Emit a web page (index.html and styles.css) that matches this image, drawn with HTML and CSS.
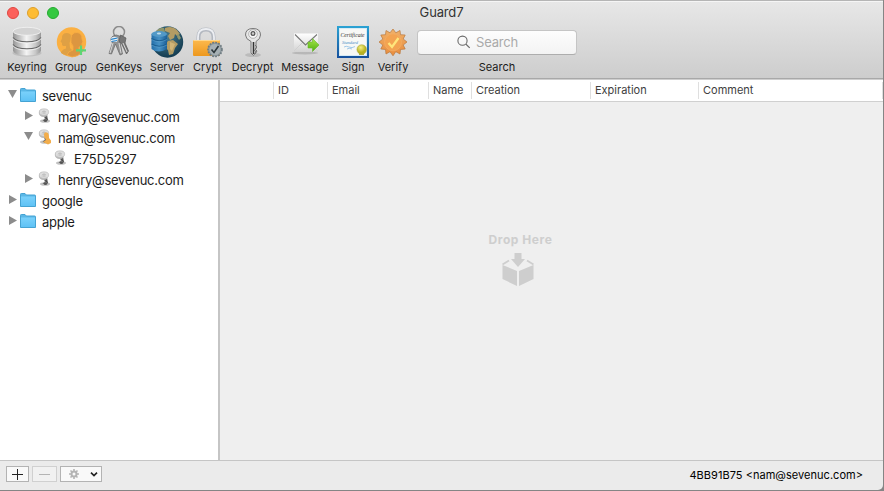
FILE: index.html
```html
<!DOCTYPE html>
<html lang="en">
<head>
<meta charset="utf-8">
<title>Guard7</title>
<link rel="stylesheet" href="styles.css">
</head>
<body>
<svg class="defs" width="0" height="0">
  <defs>
    <linearGradient id="metal"><stop offset="0" stop-color="#959595"/><stop offset=".25" stop-color="#c5c5c5"/><stop offset=".48" stop-color="#f4f4f4"/><stop offset=".8" stop-color="#c8c8c8"/><stop offset="1" stop-color="#979797"/></linearGradient>
    <linearGradient id="lock" x2="0" y2="1"><stop offset="0" stop-color="#fcb94d"/><stop offset="1" stop-color="#ed981e"/></linearGradient>
    <linearGradient id="dbblue"><stop offset="0" stop-color="#2470ab"/><stop offset=".5" stop-color="#4791c4"/><stop offset="1" stop-color="#1b5f98"/></linearGradient>
    <radialGradient id="sea" cx=".45" cy=".35" r=".65"><stop offset="0" stop-color="#4c8093"/><stop offset="1" stop-color="#133b50"/></radialGradient>
    <linearGradient id="badge" x2="0" y2="1"><stop offset="0" stop-color="#efb16b"/><stop offset="1" stop-color="#e98c3d"/></linearGradient>
    <linearGradient id="cert" x2="0" y2="1"><stop offset="0" stop-color="#2ba3d4"/><stop offset="1" stop-color="#154f9c"/></linearGradient>
    <linearGradient id="env" x2="0" y2="1"><stop offset="0" stop-color="#fff"/><stop offset="1" stop-color="#d2d2d2"/></linearGradient>
    <linearGradient id="green" x2="0" y2="1"><stop offset="0" stop-color="#a8e94b"/><stop offset="1" stop-color="#4fae10"/></linearGradient>
    <linearGradient id="folder" x2="0" y2="1"><stop offset="0" stop-color="#7ad1fb"/><stop offset="1" stop-color="#5fc2f5"/></linearGradient>
    <radialGradient id="seal" cx=".4" cy=".3"><stop offset="0" stop-color="#f4ef83"/><stop offset="1" stop-color="#b9b321"/></radialGradient>
    <symbol id="i-folder" viewBox="0 0 16 14">
      <path d="M.5 13.5V1.3Q.5.5 1.3.5H5L6.4 2H14.7Q15.500 2 15.500 2.800V13.500Z" fill="#5ab7e6" stroke="#45a3d3"/>
      <path d="M1 3.500H15V13H1Z" fill="url(#folder)"/>
    </symbol>
    <symbol id="i-key" viewBox="0 0 14 16">
      <ellipse cx="7" cy="13" rx="5" ry="1.800" fill="#c2c2c2"/>
      <path d="M5.500 7L9 6L10 12.300L7.500 14L4.500 12.500L6.800 10.800Z" fill="#6c6c6c"/>
      <ellipse cx="5.500" cy="4.900" rx="4.700" ry="4" fill="#b9b9b9"/>
      <ellipse cx="6" cy="4" rx="4.700" ry="3.200" fill="#dedede" stroke="#bcbcbc" stroke-width=".6"/>
      <path d="M4 3.500H8M3.500 5H8M6 2V6" stroke="#b5b5b5" stroke-width=".6"/>
      <path d="M7.500 9L9.500 11.500M6 13H9" stroke="#333" stroke-width=".8"/>
    </symbol>
  </defs>
</svg>
<div class="window">
  <header class="toolbar">
    <div class="titlebar">
      <div class="lights"><i class="close"></i><i class="min"></i><i class="max"></i></div>
      <div class="title">Guard7</div>
    </div>
    <div class="tools">
      <div class="tool">
        <svg width="32" height="32" viewBox="0 0 32 32"><ellipse cx="16" cy="27" rx="14.500" ry="3.500" fill="#aaa" opacity=".5"/>
          <path d="M2 5V25Q4 29.500 16 29.500T30 25V5Z" fill="url(#metal)"/>
          <path d="M2 11.500Q5 15.800 16 15.800T30 11.500M2 18.500Q5 22.800 16 22.800T30 18.500" fill="none" stroke="#666" stroke-width="1.200"/>
          <path d="M2 12.800Q5 17 16 17T30 12.800M2 19.800Q5 24 16 24T30 19.800" fill="none" stroke="#f5f5f5" stroke-width=".8"/>
          <ellipse cx="16" cy="5.300" rx="14" ry="4" fill="#d3d3d3" stroke="#f4f4f4" stroke-width=".8"/></svg>
        <span>Keyring</span></div>
      <div class="tool">
        <svg width="32" height="32" viewBox="0 0 32 32"><circle cx="16.500" cy="16" r="14.700" fill="#fbb042"/>
          <path d="M6 27Q6 24 11 22.500V20H8Q6.500 19 7 17L5.500 15.500L7 12.500Q6.500 7 12 7Q17 7 16 13L14.500 17L15 22L17 24V30Q10 29.500 6 27Z" fill="#dfa044"/>
          <path d="M12 29Q12.500 25.500 18 24V20Q15 17 16 12Q16.500 6.500 22 6.500Q27 7 27 13L28 16L27 17V20L24 21V23.500L28 25Q23 31 17 31Z" fill="#dc9640" stroke="#f9ad43" stroke-width=".8"/>
          <path d="M26 19.500V29M21 24.300H31" stroke="#5ed575" stroke-width="2.200"/></svg>
        <span>Group</span></div>
      <div class="tool">
        <svg width="32" height="32" viewBox="0 0 32 32"><circle cx="16" cy="6" r="5.500" fill="none" stroke="#8c8c8c" stroke-width="1.500"/>
          <path d="M13.500 9L19 11L17 16L19.500 28L17 29L12.500 18L8.500 28L6 27.500L9.500 17Q6 13 10 10Z" fill="#929292" stroke="#666" stroke-width=".7"/>
          <path d="M17.500 9L23 12L22 17L25.500 25L23.500 28L19 18.500L16 15Z" fill="#777" stroke="#575757" stroke-width=".7"/>
          <path d="M10 17L7 27M16 17L18 27M20 17L24 26" stroke="#d7d7d7" stroke-width="1"/>
          <path d="M8 12Q11 9.500 15 12L14 16L8 15.500Z" fill="#e5edf4"/><path d="M8 13.300L14.500 12M8.500 15.500L14 14.500" stroke="#2484cc" stroke-width="1.200"/></svg>
        <span>GenKeys</span></div>
      <div class="tool">
        <svg width="34" height="32" viewBox="0 0 34 32"><circle cx="17.500" cy="16" r="15.700" fill="url(#sea)"/>
          <path d="M15 2Q22-1 27 4L30 8L27 10L25 8L24 12L20 14L18 10L20 7L15 5ZM18 15L23 14L28 18L25 22L23 28L19 29L18 24L14 21Z" fill="#b39c64"/>
          <path d="M28 7L31 12L29 14L27 11ZM6 5Q10 1 14 2L15 6L8 9Z" fill="#8d956d"/>
          <path d="M20 16L25 18L22 25L20 23Z" fill="#d1b577"/>
          <path d="M1.500 8V23Q8 28 17 23V8Z" fill="url(#dbblue)"/><ellipse cx="9.200" cy="8" rx="7.800" ry="3" fill="#5299c7"/>
          <path d="M1.500 12.500Q9 17 17 12.500M1.500 18Q9 22.500 17 18" stroke="#1b5f92" stroke-width="1.100" fill="none"/><path d="M1.500 13.500Q9 18 17 13.500M1.500 19Q9 23.500 17 19" stroke="#62a4cf" stroke-width=".5" fill="none"/><ellipse cx="9" cy="7.500" rx="2.200" ry="1" fill="#bfdcec"/></svg>
        <span>Server</span></div>
      <div class="tool">
        <svg width="32" height="32" viewBox="0 0 32 32"><path d="M6.500 16V11Q6.500 3.500 14 3.500T21.500 11V16" fill="none" stroke="#b2b7bf" stroke-width="4"/>
          <path d="M6 15V11Q6 3 14 3T22 11V15" fill="none" stroke="#eceef2" stroke-width="1.800"/>
          <rect x="1" y="14" width="27" height="16" rx="1" fill="url(#lock)"/><path d="M1.500 14.500H27.500" stroke="#ffd78c"/>
          <circle cx="23" cy="23.500" r="7" fill="#8c989d" stroke="#6d7a80" stroke-width="1.600" stroke-dasharray="1.800 1.200"/><circle cx="23" cy="23.500" r="5.500" fill="#a6b0b4"/>
          <path d="M19.500 23.500L22 26.500L26.500 20" fill="none" stroke="#2d373c" stroke-width="1.600"/></svg>
        <span>Crypt</span></div>
      <div class="tool">
        <svg width="32" height="32" viewBox="0 0 32 32"><ellipse cx="16" cy="29" rx="8" ry="2" fill="#aaa" opacity=".6"/>
          <path d="M16 2.500Q23.500 2.500 23.500 9Q23.500 13 19 15.500V23L17.500 24L19 26L16.500 29.500L14 27V15.500Q8.500 13 8.500 9Q8.500 2.500 16 2.500Z" fill="#e6e6e6" stroke="#777"/>
          <circle cx="16" cy="8" r="4.300" fill="#fafafa" stroke="#999" stroke-width=".7"/><circle cx="16" cy="7.500" r="1.900" fill="#d0d0d0" stroke="#555" stroke-width="1.200"/>
          <path d="M16.500 16V28" stroke="#333" stroke-width="1.600"/><path d="M18 19L20 21L18 23L20 25L18 28" fill="none" stroke="#777"/></svg>
        <span>Decrypt</span></div>
      <div class="tool">
        <svg width="32" height="32" viewBox="0 0 32 32"><ellipse cx="16" cy="27" rx="13" ry="1.500" fill="#999" opacity=".5"/>
          <rect x="5" y="7.500" width="24" height="18.500" fill="url(#env)"/><path d="M5 25L14 16M29 25L20 16" stroke="#d0d0d0"/><path d="M6 8.500L16.500 19L28 8.500" fill="none" stroke="#777" stroke-width="1.100"/>
          <path d="M19 16H23.500V12.500L30 19L23.500 25.500V22H19Z" fill="url(#green)" stroke="#64b527" stroke-width=".6"/></svg>
        <span>Message</span></div>
      <div class="tool">
        <svg width="32" height="32" viewBox="0 0 32 32"><rect width="32" height="32" fill="url(#cert)"/><rect x="2" y="2" width="28" height="28" fill="#d7ebf5"/><rect x="3" y="3" width="26" height="26" fill="#f7f8f6"/>
          <text class="cert-name" x="3.500" y="11" textLength="24" lengthAdjust="spacingAndGlyphs">Certificate</text>
          <text class="cert-kind" x="5" y="18" textLength="16" lengthAdjust="spacingAndGlyphs">Standard</text>
          <path d="M7 21Q9 19.500 12 21T18 20.500M10 23Q12 21.500 15 23" fill="none" stroke="#8bbce4" stroke-width=".8"/>
          <path d="M22 26V29H27V26" fill="#b7b341"/><circle cx="24.700" cy="23.500" r="4.800" fill="url(#seal)" stroke="#aaa642" stroke-width=".5"/></svg>
        <span>Sign</span></div>
      <div class="tool">
        <svg width="32" height="32" viewBox="0 0 32 32"><path d="M16 3L18.800 6.800L23 4.500L23.500 8.700L28.200 9L26.200 13L30 16L26.200 19L28.200 23L23.500 23.500L23 28L18.800 25.700L16 29.800L13 25.700L9 28L8.500 23.500L3.800 23L5.800 19L2 16L5.800 13L3.800 9L8.500 8.700L9 4.500L13 6.800Z" fill="url(#badge)" stroke="#b9793d" stroke-width=".7"/><circle cx="16" cy="16.300" r="8.500" fill="#f3a351" stroke="#f3b26a" stroke-width=".6"/>
          <path d="M11.500 17L15 21L21.500 12" fill="none" stroke="#ffe57b" stroke-width="2.300"/></svg>
        <span>Verify</span></div>
      <div class="tool search">
        <div class="field"><svg width="14" height="14" viewBox="0 0 14 14"><circle cx="5.500" cy="5.700" r="4.600" fill="none" stroke="#696969" stroke-width="1.100"/><path d="M8.900 9.100L12.700 12.900" stroke="#696969" stroke-width="1.300"/></svg><span class="placeholder">Search</span></div>
        <span>Search</span></div>
    </div>
  </header>
  <main class="content">
    <nav class="tree">
      <div class="row"><i class="arrow open"></i><svg class="folder"><use href="#i-folder"/></svg><span>sevenuc</span></div>
      <div class="row child"><i class="arrow"></i><svg class="key"><use href="#i-key"/></svg><span>mary@sevenuc.com</span></div>
      <div class="row child"><i class="arrow open"></i><svg class="key" viewBox="0 0 14 16"><use href="#i-key" width="14" height="16"/><path d="M6 5Q7 2 10 4Q11.500 6 11 9L13 11.500V14L10 15.500L5 13L8 11Q5.500 8 6 5Z" fill="#f2ad4b"/></svg><span>nam@sevenuc.com</span></div>
      <div class="row leaf"><i class="arrow none"></i><svg class="key"><use href="#i-key"/></svg><span class="keyid">E75D5297</span></div>
      <div class="row child"><i class="arrow"></i><svg class="key"><use href="#i-key"/></svg><span>henry@sevenuc.com</span></div>
      <div class="row"><i class="arrow"></i><svg class="folder"><use href="#i-folder"/></svg><span>google</span></div>
      <div class="row"><i class="arrow"></i><svg class="folder"><use href="#i-folder"/></svg><span>apple</span></div>
    </nav>
    <section class="table">
      <div class="columns"><span></span><span>ID</span><span>Email</span><span>Name</span><span>Creation</span><span>Expiration</span><span>Comment</span></div>
      <div class="drop"><span>Drop Here</span>
        <svg width="34" height="34" viewBox="0 0 34 34" fill="#cecece"><path d="M13.500 0H20.500V6H24L17 14L10 6H13.500ZM1.500 12L16 18V33L1.500 26ZM32.500 12L18 18V33L32.500 26Z"/><path d="M8 7.500L1.500 11.500M26 7.500L32.500 11.500" stroke="#cecece" stroke-width="1.800"/></svg>
      </div>
    </section>
  </main>
  <footer class="footer">
    <button class="btn add" aria-label="Add"><svg width="11" height="11"><path d="M5.500 0V11M0 5.500H11" stroke="#222"/></svg></button>
    <button class="btn remove" aria-label="Remove"><svg width="11" height="11"><path d="M0 5.500H11" stroke="#b4b4b4"/></svg></button>
    <button class="btn gear" aria-label="Actions"><svg width="10" height="10" viewBox="0 0 10 10"><circle cx="5" cy="5" r="2.500" fill="none" stroke="#b4b4b4" stroke-width="2"/><path d="M5 0V2M5 8V10M0 5H2M8 5H10M1.500 1.500L3 3M7 7L8.500 8.500M8.500 1.500L7 3M3 7L1.500 8.500" stroke="#b4b4b4" stroke-width="1.600"/></svg><svg width="8" height="5"><path d="M1 .7L4 3.500L7 .7" fill="none" stroke="#222" stroke-width="1.700"/></svg></button>
    <span class="status">4BB91B75 &lt;nam@sevenuc.com&gt;</span>
  </footer>
</div>
</body>
</html>
```
FILE: styles.css
```css
* { box-sizing: border-box; }
body { margin: 0; font-family: Inter, "Liberation Sans", sans-serif; color: #1c1c1c; background: #858585; }
.defs { position: absolute; }
svg { display: block; flex: none; }
.window { width: 883px; height: 490px; display: flex; flex-direction: column; border-top: 1px solid #b5b5b5; border-radius: 0 0 5px 0; overflow: hidden; background: #ebebeb; }
.toolbar { height: 78px; flex: none; background: linear-gradient(#e7e7e7, #cdcdcd); border-top: 1px solid #f5f5f5; border-bottom: 1px solid #a8a8a8; }
.titlebar { height: 23px; display: grid; grid-template-columns: 1fr auto 1fr; align-items: center; }
.lights { display: flex; gap: 8px; padding: 0 0 2px 7px; }
.lights i { width: 12px; height: 12px; border-radius: 50%; }
.close { background: #fc605b; border: 1px solid #e04640; }
.min { background: #fdbc34; border: 1px solid #de9f29; }
.max { background: #35c841; border: 1px solid #25aa30; }
.title { font-size: 13px; line-height: 21px; letter-spacing: -.15px; color: #333; padding-bottom: 2px; }
.tools { display: grid; grid-template-columns: 44px 44px 52px 44px 37px 53px 52px 44px 36px 172px; padding-left: 5px; }
.tool { display: flex; flex-direction: column; align-items: center; font-size: 11px; line-height: 14px; gap: 2px; white-space: nowrap; padding-top: 1px; }
.tool > svg { margin: 0 -2px; }
.cert-name { font: italic 6px "Liberation Serif", serif; fill: #333; }
.cert-kind { font: italic 4.500px "Liberation Serif", serif; fill: #4389c5; }
.field { width: 160px; height: 25px; margin: 4px 1px 3px 0; padding: 0 18px 1px 0; display: flex; align-items: center; justify-content: center; gap: 5px; background: linear-gradient(#fdfdfd, #f3f3f3); border: 1px solid #c5c5c5; border-bottom-color: #adadad; border-radius: 4px; }
.placeholder { font-size: 13px; color: #aaa; letter-spacing: -.2px; }
.content { flex: 1; display: flex; min-height: 0; border-top: 1px solid #cecece; }
.tree { width: 220px; flex: none; background: #fff; border-right: 2px solid #c5c5c5; padding-top: 6px; }
.row { display: flex; align-items: center; height: 21px; padding-left: 8px; font-size: 13px; line-height: 21px; letter-spacing: -.25px; white-space: nowrap; }
.row .keyid { letter-spacing: -.1px; }
.row.child { padding-left: 24px; }
.row.leaf { padding-left: 40px; }
.arrow { width: 12px; height: 21px; flex: none; }
.arrow::before { content: ""; display: block; width: 8px; height: 9px; margin: 4px 0 0 1px; background: #8c8c8c; clip-path: polygon(0 0, 100% 50%, 0 100%); }
.arrow.open::before { width: 9px; height: 8px; margin-left: 0; clip-path: polygon(0 0, 100% 0, 50% 100%); }
.arrow.none::before { background: none; }
.folder { width: 16px; height: 14px; margin-right: 6px; margin-top: -3px; }
.key { width: 14px; height: 16px; margin: -3px 6px 0 2px; }
.table { flex: 1; display: flex; flex-direction: column; background: #efefef; }
.columns { height: 22px; flex: none; display: grid; grid-template-columns: 54px 54px 101px 43px 119px 108px 1fr; background: #fff; border-bottom: 1px solid #d0d0d0; padding: 2px 0; font-size: 11px; line-height: 17px; color: #404040; }
.columns span { border-right: 1px solid #dfdfdf; padding-left: 4px; }
.drop { flex: 1; display: flex; flex-direction: column; align-items: center; padding: 131px 67px 0 0; gap: 6px; color: #cecece; font-size: 12px; line-height: 14px; font-weight: 700; }
.drop span { letter-spacing: .55px; margin-right: -5px; }
.footer { height: 30px; flex: none; display: flex; align-items: center; gap: 3px; border-top: 1px solid #c5c5c5; padding: 0 20px 2px 6px; }
.btn { width: 23px; height: 16px; padding: 0; margin-top: -1px; display: flex; align-items: center; justify-content: center; background: #f9f9f9; border: 1px solid #b3b3b3; }
.remove { width: 25px; background: #f1f1f1; border-color: #d0d0d0; }
.gear { width: 42px; gap: 11px; padding-left: 4px; }
.status { margin-left: auto; font-size: 11px; line-height: 14px; letter-spacing: .03px; color: #000; }
```
